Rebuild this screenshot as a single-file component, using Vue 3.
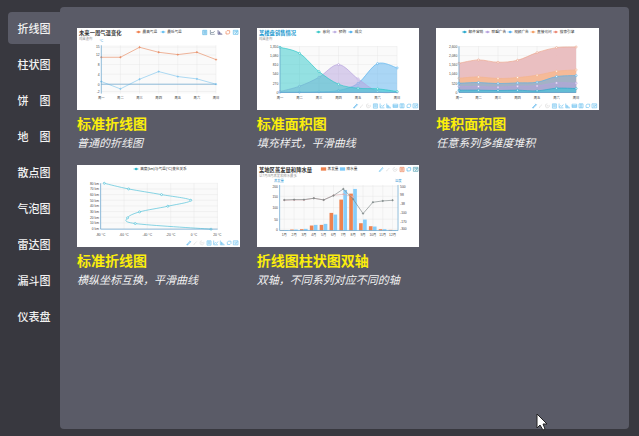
<script setup>
    import { ref } from 'vue'

    const tabs = ['折线图', '柱状图', '饼　图', '地　图', '散点图', '气泡图', '雷达图', '漏斗图', '仪表盘']
    const current = ref(0)

    const week = ['周一', '周二', '周三', '周四', '周五', '周六', '周日']
    const months = ['1月', '2月', '3月', '4月', '5月', '6月', '7月', '8月', '9月', '10月', '11月', '12月']

    // toolbar glyphs, each in a 16 x 16 box
    const glyphs = {
        pen: 'M2 14L12 3M5 14L14 5M2 14h4M11 2l3 3',
        erase: 'M3 13L12 4M3 13l3-1',
        clear: 'M8 2a6 6 0 1 0 5 3M6 6l4 4M10 6l-4 4',
        data: 'M2 2h12v13H2zM4 5h8M4 8h8M4 11h8',
        line: 'M2 1v13h13M3 11l4-4 3 3 5-6',
        bar: 'M2 1v13h13M5 13V5M8 13V8M11 13v-3M6 13V6',
        stack: 'M1 3h14v10H1zM1 7h14M1 10h14',
        tiled: 'M2 2h12v12H2zM6 2v12M10 2v12',
        restore: 'M3 6V13h8L14 10V3H6z',
        save: 'M1 2h14v12H1zM4 6h8M5 8l3 4 6-8'
    }

    function tools(names, xs, y, colors) {
        return names.map((name, i) => ({
            d: glyphs[name],
            at: `translate(${xs[i]} ${y})`,
            color: colors[i] || colors[colors.length - 1]
        }))
    }

    function spread(labels, from, step) {
        return labels.map((text, i) => ({ text, pos: from + step * i }))
    }

    function points(xs, ys) {
        return ys.map((y, i) => [xs[i].pos, y])
    }

    function straight(pts) {
        return 'M' + pts.map(p => p.join(' ')).join('L')
    }

    function smooth(pts) {
        let d = 'M' + pts[0].join(' ')
        for (let i = 0; i < pts.length - 1; i++) {
            const a = pts[i - 1] || pts[i]
            const b = pts[i]
            const c = pts[i + 1]
            const e = pts[i + 2] || c
            d += `C${b[0] + (c[0] - a[0]) / 6} ${b[1] + (c[1] - a[1]) / 6} ${c[0] - (e[0] - b[0]) / 6} ${c[1] - (e[1] - b[1]) / 6} ${c[0]} ${c[1]}`
        }
        return d
    }

    function area(pts, base) {
        return `${smooth(pts)}L${pts[pts.length - 1][0]} ${base}L${pts[0][0]} ${base}Z`
    }

    const x1 = spread(week, 82, 57.5)
    const x2 = spread(week, 80, 58.7)
    const x3 = spread(week, 82, 58.7)
    const x5 = spread(months, 93, 29.6)

    const fullTools = ['pen', 'erase', 'clear', 'data', 'line', 'bar', 'stack', 'tiled', 'restore', 'save']
    const fullXs = [299, 318, 338, 359, 379, 399, 419, 439, 459, 479]
    const fullColors = ['#4aaeea', '#dcdcdc', '#dcdcdc', '#6fc3f0']

    function areaSeries(xs, ys, color, fill, opacity) {
        const pts = points(xs, ys)
        return { pts, d: smooth(pts), color, fill, opacity, area: area(pts, 206) }
    }

    function lineSeries(pts, color, curve) {
        return { pts, d: curve ? smooth(pts) : straight(pts), color }
    }

    const evaporation = [205, 203, 202, 191, 189, 153, 113, 95, 184, 193, 202, 204]
    const rain = [205, 203, 201, 189, 186, 158, 84, 81, 173, 194, 202, 205]

    const cards = [
        {
            name: '标准折线图',
            desc: '普通的折线图',
            box: '9 12 489 246',
            title: '未来一周气温变化', titleColor: '#333', sub: '纯属虚构',
            legend: [
                { x: 186, text: '最高气温', color: '#f0804e' },
                { x: 260, text: '最低气温', color: '#6fc3f2' }
            ],
            frame: { x: 82, y: 64, w: 345, h: 145 },
            xs: x1,
            ys: [['15', 69], ['12', 93], ['8', 122], ['4', 151], ['0', 181], ['-2', 203]],
            zero: 181,
            unit: { text: '°C', x: 82, y: 54 },
            filled: true,
            series: [
                lineSeries(points(x1, [100, 100, 70, 85, 92, 85, 107]), '#e88f68'),
                lineSeries(points(x1, [173, 195, 166, 143, 158, 165, 181]), '#86c8ee')
            ],
            tools: tools(['data', 'line', 'bar', 'restore', 'save'], [385, 408, 431, 454, 478], 17, ['#42a9e0', '#6d7f90', '#5b5b8c', '#ec8054', '#4fb4e6'])
        },
        {
            name: '标准面积图',
            desc: '填充样式，平滑曲线',
            box: '11 12 489 246',
            title: '某楼盘销售情况', titleColor: '#1e9bd0', sub: '纯属虚构',
            legend: [
                { x: 188, text: '意向', color: '#3cc8c8' },
                { x: 237, text: '预购', color: '#c0b2e2' },
                { x: 285, text: '成交', color: '#5ab4ee' }
            ],
            frame: { x: 80, y: 67, w: 352, h: 139 },
            xs: x2,
            ys: [['1,350', 68], ['1,080', 95], ['810', 122], ['540', 150], ['270', 178], ['0', 205]],
            zero: 206,
            series: [
                areaSeries(x2, [205, 205, 204, 200, 178, 119, 132], '#5ab4ee', '#5ab1ef', 0.5),
                areaSeries(x2, [203, 187, 160, 122, 165, 203, 205], '#b6a2de', '#b6a2de', 0.5),
                areaSeries(x2, [70, 88, 143, 181, 193, 195, 203], '#2ec7c9', '#2ec7c9', 0.5)
            ],
            tools: tools(fullTools, fullXs, 238, fullColors)
        },
        {
            name: '堆积面积图',
            desc: '任意系列多维度堆积',
            box: '13 12 489 246',
            legend: [
                { x: 91, text: '邮件营销', color: '#2ba9cc' },
                { x: 160, text: '联盟广告', color: '#b6a2de' },
                { x: 228, text: '视频广告', color: '#5ab1ef' },
                { x: 297, text: '直接访问', color: '#f5a36b' },
                { x: 365, text: '搜索引擎', color: '#eb8a78' }
            ],
            frame: { x: 82, y: 67, w: 352, h: 139 },
            xs: x3,
            ys: [['2,600', 68], ['2,080', 95], ['1,560', 122], ['1,040', 150], ['520', 178], ['0', 205]],
            zero: 206,
            series: [
                areaSeries(x3, [118, 108, 115, 109, 86, 71, 69], '#eda78e', '#e9bcbe', 0.95),
                areaSeries(x3, [163, 159, 164, 161, 154, 142, 138], '#f5b48c', '#f5ba98', 1),
                areaSeries(x3, [178, 176, 179, 177, 175, 158, 155], '#5ab1e4', '#a3b2c6', 1),
                areaSeries(x3, [188, 188, 190, 187, 186, 177, 178], '#b6a2de', '#abaad2', 1),
                areaSeries(x3, [199, 199, 200, 199, 201, 193, 194], '#2ba9cc', '#62bcd4', 1)
            ],
            tools: tools(fullTools, fullXs.map(x => x + 2), 238, fullColors)
        },
        {
            name: '标准折线图',
            desc: '横纵坐标互换，平滑曲线',
            box: '9 9 489 246',
            legend: [{ x: 179, text: '高度(km)与气温(°C)变化关系', color: '#32b8cc' }],
            frame: { x: 80, y: 64, w: 352, h: 138 },
            xs: spread(['-80 °C', '-60 °C', '-40 °C', '-20 °C', '0 °C', '20 °C'], 80, 70.2),
            ys: [80, 70, 60, 50, 40, 30, 20, 10, 0].map((n, i) => [`${n} km`, 64 + 17 * i]),
            zero: 202,
            series: [
                lineSeries([[91, 64], [164, 81], [263, 98], [351, 115], [282, 133], [197, 150], [161, 168], [184, 185], [412, 202]], '#4cc0d8', true)
            ],
            tools: tools(['pen', 'erase', 'clear', 'data', 'line', 'bar', 'restore', 'save'], [337, 357, 377, 398, 418, 438, 458, 478], 235, fullColors)
        },
        {
            name: '折线图柱状图双轴',
            desc: '双轴，不同系列对应不同的轴',
            box: '11 9 489 246',
            title: '某地区蒸发量和降水量', titleColor: '#333', sub: '以7月/8月蒸发和降水最多',
            legend: [
                { x: 203, text: '蒸发量', color: '#ee8350', block: true },
                { x: 260, text: '降水量', color: '#7cc8f8', block: true }
            ],
            frame: { x: 79, y: 69, w: 356, h: 137 },
            xs: x5,
            ys: [['200', 73], ['150', 103], ['100', 137], ['50', 172], ['0', 202]],
            right: [['500', 73], ['98', 97], ['-38', 124], ['-100', 151], ['-170', 179], ['-300', 201]],
            zero: 206,
            unit: { text: '蒸发量', x: 77, y: 61 },
            rightUnit: { text: '温度', x: 436, y: 61 },
            filled: true,
            bars: x5.flatMap((m, i) => [
                { x: m.pos - 12, y: evaporation[i], h: 206 - evaporation[i], color: '#ee8350' },
                { x: m.pos, y: rain[i], h: 206 - rain[i], color: '#86cdfa' }
            ]),
            series: [
                lineSeries(points(x5, [115, 114, 114, 109, 114, 100, 97, 104]), '#d9b0b4'),
                lineSeries(points(x5, [114, 113, 113, 109, 114, 101, 81, 112, 155, 121, 117, 115]), '#808a8a')
            ],
            tools: tools(['pen', 'erase', 'clear', 'data', 'restore', 'save'], [376, 397, 418, 439, 459, 480], 14, ['#6fc3f0', '#dcdcdc', '#dcdcdc', '#ec8054', '#4fb4e6', '#4a9cae'])
        }
    ]

    cards.forEach(card => {
        card.top = Number(card.box.split(' ')[1])
        card.left = Number(card.box.split(' ')[0])
    })
</script>

<template>
    <div class="page">
        <nav class="side">
            <button
                v-for="(tab, i) in tabs"
                :key="tab"
                class="tab"
                :class="{ active: current === i }"
                @click="current = i"
            >{{ tab }}</button>
        </nav>
        <main class="panel">
            <article class="card" v-for="(card, n) in cards" :key="n">
                <svg class="chart" :viewBox="card.box">
                    <text v-if="card.title" class="title" :x="card.left + 6" :y="card.top + 20" :fill="card.titleColor">{{ card.title }}</text>
                    <text v-if="card.sub" class="sub" :x="card.left + 6" :y="card.top + 36">{{ card.sub }}</text>

                    <g v-for="item in card.legend" :key="item.text">
                        <rect v-if="item.block" :x="item.x" :y="card.top + 7" width="16" height="10" :fill="item.color" />
                        <g v-else>
                            <path :d="`M${item.x} ${card.top + 12}h15`" :stroke="item.color" stroke-width="2" />
                            <circle :cx="item.x + 8" :cy="card.top + 12" r="4" :fill="item.color" />
                        </g>
                        <text class="key" :x="item.x + 20" :y="card.top + 16">{{ item.text }}</text>
                    </g>

                    <rect :x="card.frame.x" :y="card.frame.y" :width="card.frame.w" :height="card.frame.h" fill="#fafafa" />
                    <path v-for="tick in card.ys" :key="tick[0]" class="grid" :d="`M${card.frame.x} ${tick[1]}h${card.frame.w}`" />
                    <path v-for="tick in card.xs" :key="tick.text" class="grid" :d="`M${tick.pos} ${card.frame.y}v${card.frame.h}`" />

                    <rect v-for="(bar, i) in card.bars" :key="i" :x="bar.x" :y="bar.y" width="11" :height="bar.h" :fill="bar.color" />

                    <g v-for="(line, i) in card.series" :key="i">
                        <path v-if="line.area" :d="line.area" :fill="line.fill" :fill-opacity="line.opacity" />
                        <path class="line" :d="line.d" :stroke="line.color" />
                        <circle v-for="(p, k) in line.pts" :key="k" :cx="p[0]" :cy="p[1]" :r="card.filled ? 2 : 3" :fill="card.filled ? line.color : '#fff'" :stroke="line.color" stroke-width="2" />
                    </g>

                    <path class="axis" :d="`M${card.frame.x} ${card.frame.y}v${card.frame.h}M${card.frame.x} ${card.zero}h${card.frame.w}`" />
                    <path v-if="card.right" class="axis" :d="`M${card.frame.x + card.frame.w} ${card.frame.y}v${card.frame.h}`" />

                    <text v-for="tick in card.ys" :key="tick[0]" class="tick end" :x="card.frame.x - 5" :y="tick[1] + 4">{{ tick[0] }}</text>
                    <text v-for="tick in card.right" :key="tick[0]" class="tick" :x="card.frame.x + card.frame.w + 6" :y="tick[1] + 4">{{ tick[0] }}</text>
                    <text v-for="tick in card.xs" :key="tick.text" class="tick mid" :x="tick.pos" :y="card.top + 213">{{ tick.text }}</text>
                    <text v-if="card.unit" class="tick mid unit" :x="card.unit.x" :y="card.unit.y">{{ card.unit.text }}</text>
                    <text v-if="card.rightUnit" class="tick mid unit" :x="card.rightUnit.x" :y="card.rightUnit.y">{{ card.rightUnit.text }}</text>

                    <path v-for="(tool, i) in card.tools" :key="i" class="tool" :d="tool.d" :transform="tool.at" :stroke="tool.color" />
                </svg>
                <h3>{{ card.name }}</h3>
                <p>{{ card.desc }}</p>
            </article>
        </main>
        <svg class="pointer" viewBox="0 0 12 18">
            <path d="M1 1v14l3-3 3 5 2-1-2-5h4z" fill="#fff" stroke="#222" stroke-width="1" />
        </svg>
    </div>
</template>

<style>
    body{
        background: #38383f;
    }
</style>

<style scoped>
    .page{
        position: relative;
        display: flex;
        box-sizing: border-box;
        min-height: 100vh;
        padding: 7px 10px 7px 8px;
        font-family: "Liberation Sans", "Noto Sans CJK SC", sans-serif;
    }
    .side{
        display: flex;
        flex-direction: column;
        gap: 4px;
        width: 52px;
        padding-top: 5px;
        flex-shrink: 0;
    }
    .tab{
        height: 32px;
        padding: 0;
        border: none;
        border-radius: 4px 0 0 4px;
        background: transparent;
        color: #f2f2f2;
        font-family: inherit;
        font-size: 11px;
        font-weight: 500;
        cursor: pointer;
    }
    .tab.active{
        background: #5a5b67;
    }
    .panel{
        flex: 1;
        display: grid;
        grid-template-columns: repeat(3, 1fr);
        gap: 13px 17px;
        align-content: start;
        padding: 21px 30px 21px 17px;
        border-radius: 4px;
        background: #5a5b67;
    }
    .card{
        min-width: 0;
    }
    .chart{
        display: block;
        width: 100%;
        background: #fff;
    }
    h3{
        margin: 4px 0 0;
        font-size: 14px;
        line-height: 20px;
        color: #fbee0c;
        white-space: nowrap;
    }
    p{
        margin: 0;
        font-size: 11px;
        line-height: 18px;
        font-style: italic;
        color: #f2f2f2;
        white-space: nowrap;
    }
    .title{
        font-size: 16px;
        font-weight: bold;
    }
    .sub{
        font-size: 10px;
        fill: #999;
    }
    .key{
        font-size: 11px;
        fill: #333;
    }
    .tick{
        font-size: 10px;
        fill: #444;
    }
    .end{
        text-anchor: end;
    }
    .mid{
        text-anchor: middle;
    }
    .unit{
        fill: #3f9fd8;
    }
    .grid{
        stroke: #e2e2e2;
        stroke-width: 1;
    }
    .line{
        fill: none;
        stroke-width: 2;
    }
    .axis{
        fill: none;
        stroke: #5c9fcb;
        stroke-width: 2;
    }
    .tool{
        fill: none;
        stroke-width: 2;
    }
    .pointer{
        position: absolute;
        right: 91px;
        bottom: 5px;
        width: 12px;
        height: 18px;
    }
</style>
